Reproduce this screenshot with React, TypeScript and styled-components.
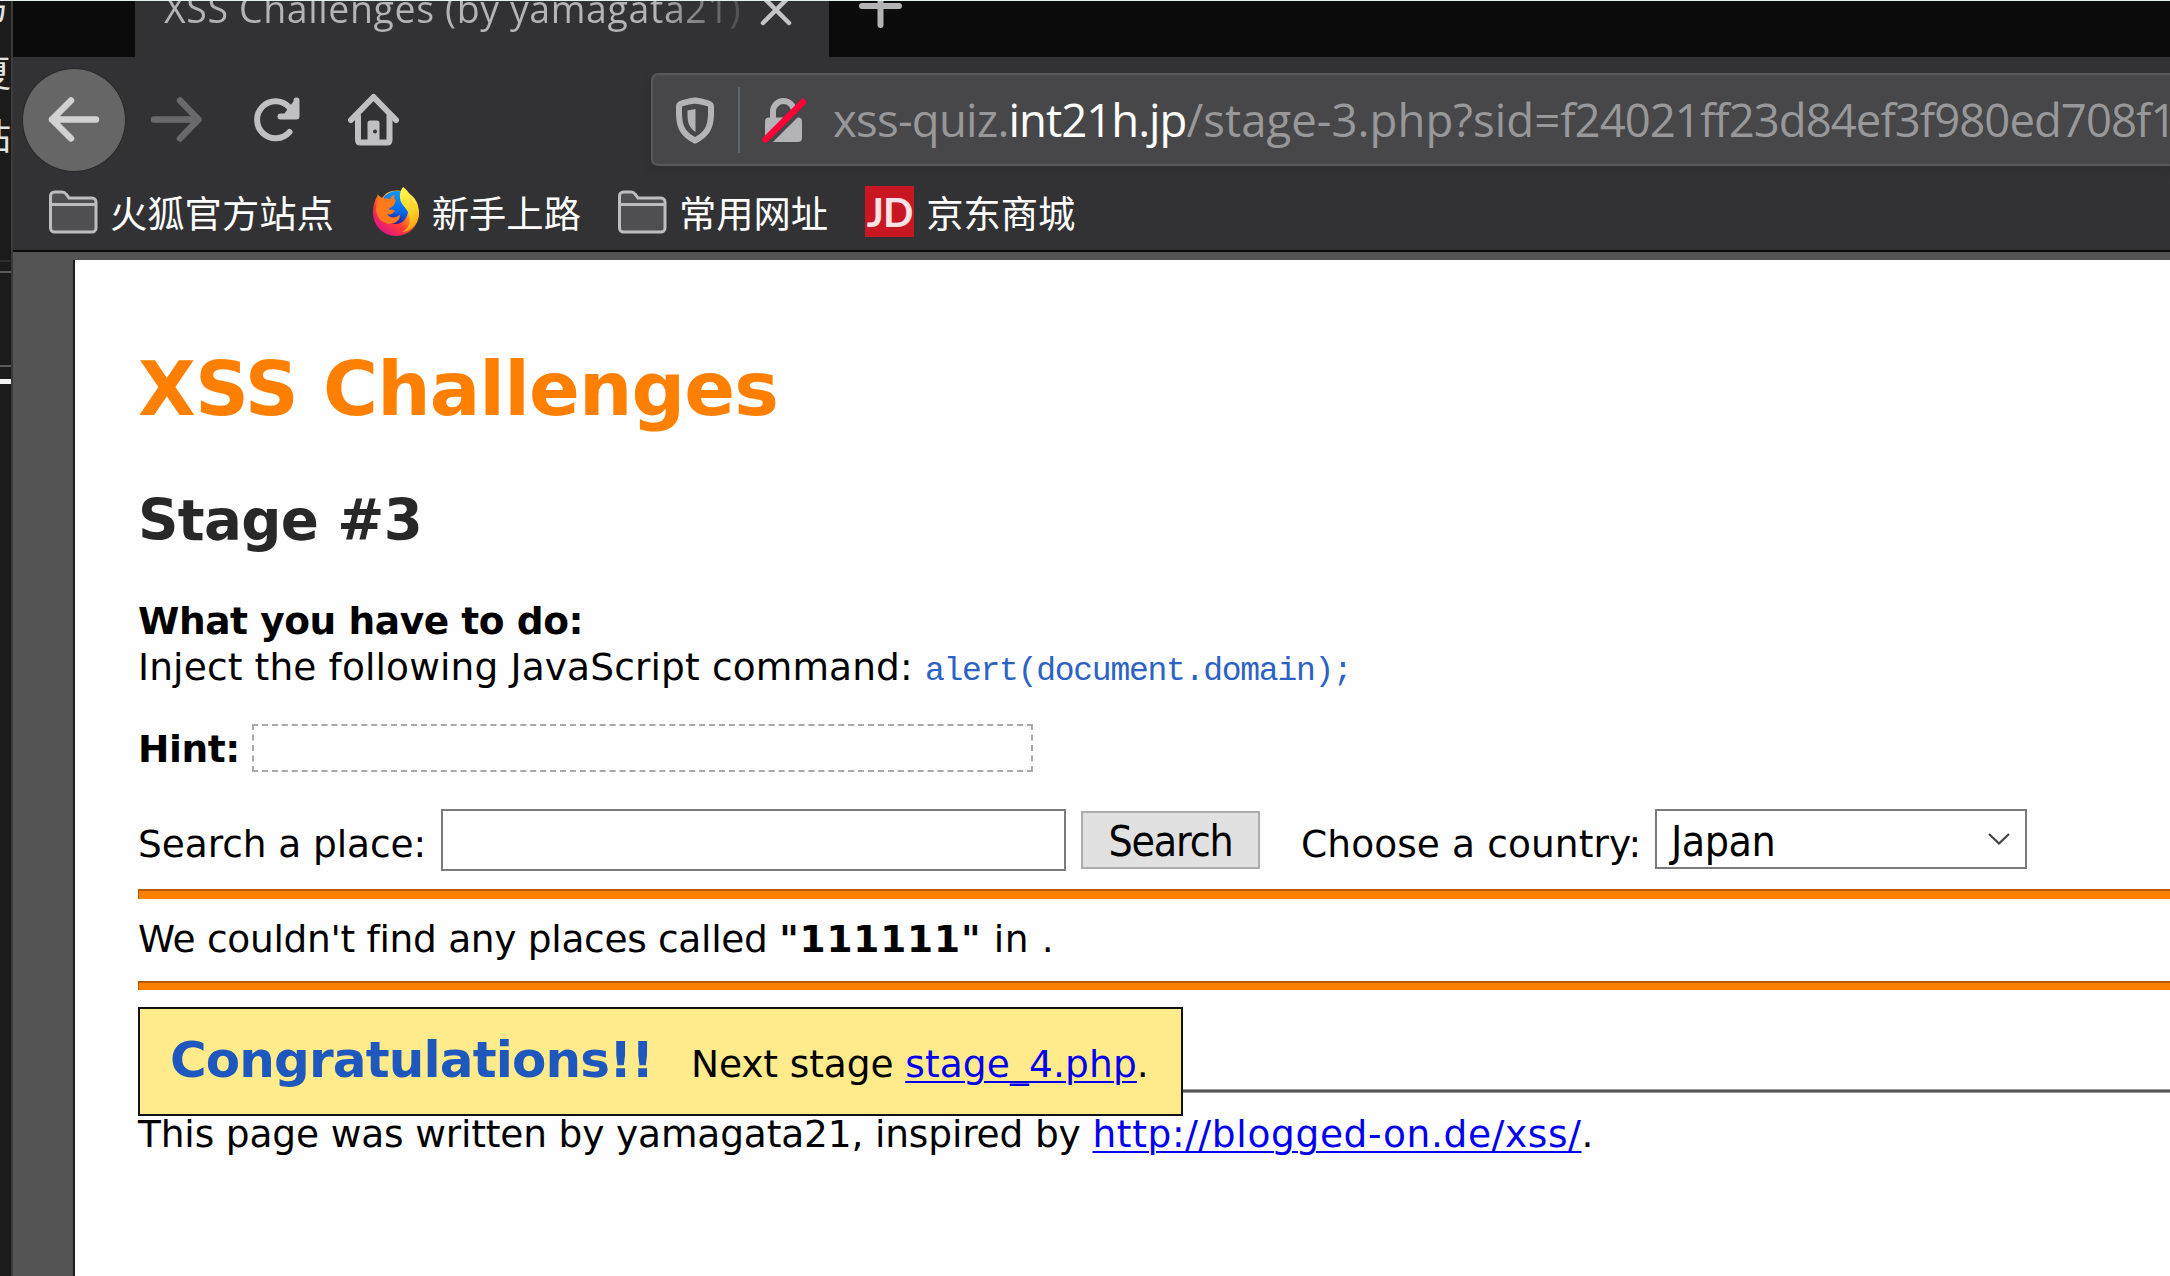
import React from "react";
import styled, { createGlobalStyle } from "styled-components";

const GlobalStyle = createGlobalStyle`
  * { box-sizing: border-box; }
  html, body { margin: 0; padding: 0; background: #1c1c1c; overflow: hidden; }
`;

const uiFont = `"Open Sans", "Noto Sans CJK SC", sans-serif`;
const pageFont = `"DejaVu Sans", sans-serif`;
const controlFont = `"DejaVu Sans Condensed", "DejaVu Sans", sans-serif`;

const Screen = styled.div`
  display: flex;
  width: 2170px;
  height: 1276px;
  overflow: hidden;
  background: #1c1c1c;
  border-top: 1px solid #e6efed;
`;

/* Sliver of the window behind the browser */
const BackWindow = styled.div`
  display: flex;
  flex-direction: column;
  align-items: flex-end;
  flex: none;
  width: 13px;
  overflow: hidden;
  background: #1b1b1b;
  border-right: 2px solid #3a3a3b;
`;

const BackGlyph = styled.div<{ $gap: number }>`
  flex: none;
  margin-top: ${(p) => p.$gap}px;
  height: 40px;
  font: 36px/40px "Noto Sans CJK SC", sans-serif;
  color: #e4e4e4;
`;

const BackLine = styled.div<{ $gap: number; $size: number; $color: string }>`
  flex: none;
  width: 13px;
  margin-top: ${(p) => p.$gap}px;
  height: ${(p) => p.$size}px;
  background: ${(p) => p.$color};
`;

const Browser = styled.div`
  display: flex;
  flex-direction: column;
  flex: 1;
  min-width: 0;
  background: #545454;
`;

const TabBar = styled.div`
  display: flex;
  flex: none;
  height: 56px;
  padding-left: 122px;
  background: #0b0b0c;
`;

const Tab = styled.div`
  display: flex;
  width: 694px;
  height: 56px;
  padding-left: 29px;
  background: #323234;
`;

const TabTitle = styled.div`
  width: 586px;
  margin-top: -17px;
  height: 50px;
  font: 37.5px/50px ${uiFont};
  letter-spacing: 0.6px;
  white-space: nowrap;
  color: transparent;
  background: linear-gradient(90deg, #b4b4b6 84%, #4a4a4c 99%);
  background-clip: text;
  -webkit-background-clip: text;
`;

const TabClose = styled.svg`
  margin: -8px 0 0 9px;
  width: 34px;
  height: 34px;
`;

const NewTab = styled.svg`
  margin: -18px 0 0 28px;
  width: 46px;
  height: 46px;
`;

const NavBar = styled.div`
  display: flex;
  align-items: center;
  flex: none;
  height: 125px;
  background: #323234;
`;

const BackButton = styled.div`
  display: flex;
  align-items: center;
  justify-content: center;
  width: 102px;
  height: 102px;
  margin-left: 10px;
  border-radius: 50%;
  background: #666667;
  box-shadow: 0 0 0 1px #29292a;
`;

const NavIcon = styled.svg<{ $gap?: number }>`
  flex: none;
  width: 56px;
  height: 56px;
  margin-left: ${(p) => p.$gap ?? 0}px;
`;

const UrlBar = styled.div`
  display: flex;
  align-items: center;
  flex: 1;
  min-width: 0;
  height: 93px;
  margin-left: 248px;
  border: 2px solid #59595b;
  border-right: 0;
  border-radius: 7px 0 0 7px;
  background: #474749;
  box-shadow: 0 3px 12px rgba(0, 0, 0, 0.12);
  overflow: hidden;
`;

const UrlIcon = styled.svg<{ $gap: number }>`
  flex: none;
  width: 46px;
  height: 48px;
  margin-left: ${(p) => p.$gap}px;
`;

const UrlDivider = styled.div`
  flex: none;
  width: 2px;
  height: 66px;
  margin-left: 20px;
  background: #5c666e;
`;

const UrlText = styled.div`
  margin: -2px 0 0 25px;
  font: 45.5px/62px ${uiFont};
  letter-spacing: -0.75px;
  white-space: nowrap;
  color: #98989a;
`;

const UrlHost = styled.span`
  color: #fff;
  letter-spacing: -1px;
`;

const UrlPath = styled.span`
  letter-spacing: 0.05px;
`;

const UrlQuery = styled.span`
  letter-spacing: -0.95px;
`;

const Bookmarks = styled.div`
  display: flex;
  align-items: center;
  flex: none;
  height: 70px;
  padding: 0 0 9px 35px;
  background: #323234;
  border-bottom: 2px solid #0d0d0e;
`;

const Bookmark = styled.div<{ $gap?: number; $space?: number }>`
  display: flex;
  align-items: center;
  gap: ${(p) => p.$space ?? 12}px;
  margin-left: ${(p) => p.$gap ?? 0}px;
  font: 37.3px/54px "Noto Sans CJK SC", sans-serif;
  white-space: nowrap;
  color: #fff;
`;

const BookmarkIcon = styled.svg`
  flex: none;
  width: 50px;
  height: 50px;
`;

const JdBadge = styled.div`
  width: 49px;
  height: 51px;
  background: #c81623;
  color: #fbe3e4;
  font: 700 40px/52px Lato, sans-serif;
  letter-spacing: -1px;
  text-align: center;
`;

const Page = styled.main`
  display: flex;
  flex-direction: column;
  flex: 1;
  margin: 8px 0 0 60px;
  padding-left: 63px;
  border-left: 2px solid #1c1c1c;
  background: #fefefe;
  color: #000;
  font: 37.5px/45px ${pageFont};
  white-space: nowrap;
`;

const Title = styled.h1`
  margin: 84px 0 0;
  font-size: 75px;
  line-height: 90px;
  letter-spacing: -0.9px;
  color: #ff8000;
`;

const Stage = styled.h2`
  margin: 53px 0 0;
  font-size: 56.2px;
  line-height: 68px;
  letter-spacing: -0.65px;
  color: #282828;
`;

const Line = styled.div<{ $gap?: number; $track?: number }>`
  flex: none;
  height: 45px;
  margin-top: ${(p) => p.$gap ?? 0}px;
  letter-spacing: ${(p) => p.$track ?? 0}px;
`;

const Tracked = styled.span<{ $track: number }>`
  letter-spacing: ${(p) => p.$track}px;
`;

const Command = styled.code`
  font: 33px/40px "Liberation Mono", monospace;
  letter-spacing: -1.25px;
  color: #2b62c4;
`;

const HintRow = styled.div`
  display: flex;
  flex: none;
  height: 48px;
  margin-top: 34px;
  line-height: 50px;
`;

const HintLabel = styled.b`
  width: 114px;
  letter-spacing: -0.4px;
`;

const HintBox = styled.div`
  width: 781px;
  height: 48px;
  border: 2px dashed #a9a9a9;
`;

const FormRow = styled.div`
  display: flex;
  flex: none;
  height: 62px;
  margin-top: 37px;
`;

const Label = styled.label<{ $width: number; $gap?: number; $track?: number }>`
  flex: none;
  width: ${(p) => p.$width}px;
  margin-left: ${(p) => p.$gap ?? 0}px;
  line-height: 70px;
  letter-spacing: ${(p) => p.$track ?? 0}px;
`;

const Input = styled.input`
  width: 625px;
  height: 62px;
  border: 2px solid #7a7a7a;
  background: #fff;
`;

const SubmitButton = styled.button`
  width: 179px;
  height: 58px;
  margin: 2px 0 0 15px;
  padding: 4px 0 0;
  border: 2px solid #adadad;
  background: #e1e1e1;
  color: #000;
  font: 42.5px/50px ${controlFont};
  letter-spacing: -1.2px;
`;

const Dropdown = styled.div`
  display: flex;
  align-items: center;
  justify-content: space-between;
  width: 372px;
  height: 60px;
  padding: 6px 13px 0 14px;
  border: 2px solid #7a7a7a;
  background: #fff;
  font: 42.5px/50px ${controlFont};
  letter-spacing: -0.5px;
`;

const Chevron = styled.svg`
  width: 26px;
  height: 16px;
  margin-top: -7px;
`;

const OrangeRule = styled.hr<{ $gap: number; $size: number }>`
  flex: none;
  align-self: stretch;
  height: ${(p) => p.$size}px;
  margin: ${(p) => p.$gap}px 0 0;
  border: 0 solid #b35a00;
  border-width: 2px 0 0 1px;
  background: #ff8000;
`;

const NoticeSlot = styled.div`
  flex: none;
  height: 82px;
  margin-top: 17px;
  z-index: 1;
`;

const Notice = styled.div`
  display: flex;
  align-items: baseline;
  width: 1045px;
  height: 109px;
  padding: 19px 0 0 30px;
  border: 2px solid #111;
  background: #ffeb8b;
`;

const Congrats = styled.b`
  width: 521px;
  font-size: 50px;
  line-height: 64px;
  letter-spacing: -0.85px;
  color: #1e57bd;
`;

const Link = styled.a<{ $track?: number }>`
  color: #0000ee;
  letter-spacing: ${(p) => p.$track ?? 0}px;
  text-decoration: underline;
  text-decoration-thickness: 2px;
  text-underline-offset: 4px;
`;

const GreyRule = styled.hr`
  flex: none;
  align-self: stretch;
  height: 4px;
  margin: 0;
  border: 1px solid #9a9a9a;
  border-width: 1px 0;
  background: #555;
`;

const FolderIcon = () => (
  <BookmarkIcon viewBox="0 0 50 50" fill="none" stroke="#bdbdbf" strokeWidth="3">
    <path
      d="M2.5 9a4 4 0 0 1 4-4H14c2 0 3 .5 4 2l3 4h23a4 4 0 0 1 4 4v26a4 4 0 0 1-4 4H6.500a4 4 0 0 1-4-4z"
      fill="#4f4f51"
    />
    <path d="M3 17.500h44" />
  </BookmarkIcon>
);

const FirefoxIcon = () => (
  <BookmarkIcon viewBox="0 0 50 50">
    <defs>
      <linearGradient id="fxBody" x1="0.85" y1="0.1" x2="0.15" y2="0.9">
        <stop offset="0" stopColor="#fff44f" />
        <stop offset="0.35" stopColor="#ffa51a" />
        <stop offset="0.65" stopColor="#ff3a35" />
        <stop offset="1" stopColor="#e0128c" />
      </linearGradient>
      <linearGradient id="fxGlobe" x1="0.6" y1="0" x2="0.4" y2="1">
        <stop offset="0" stopColor="#0a9cff" />
        <stop offset="0.6" stopColor="#0668e8" />
        <stop offset="1" stopColor="#3a128c" />
      </linearGradient>
      <linearGradient id="fxFlame" x1="0.3" y1="0" x2="0.6" y2="1">
        <stop offset="0" stopColor="#fff44f" />
        <stop offset="0.6" stopColor="#ffd02a" />
        <stop offset="1" stopColor="#ff980e" />
      </linearGradient>
    </defs>
    <path d="M6 8C2 14 1 20 1 26a23 23 0 0 0 46 0C47 14 40 6 31 4 20 2 14 5 10 11z" fill="url(#fxBody)" />
    <path d="M12 10C19 2 31 3 34 8c6 8 3 28-9 29-10 0-12-5-11-11z" fill="url(#fxGlobe)" />
    <path
      d="M6 6c0 4 1 5 4 6 3-1 5-1 8 0 1-3 3-4 5-4-2 3 0 5 1 5l-2 5c-1 2-6 3-5 5 3-1 5 0 6 1-2 3-5 4-8 3 3 5 10 4 12 1 2-1 1 6-5 8-9 3-18-4-18-14z"
      fill="#ff7a1a"
    />
    <path
      d="M31 0c7 5 8 10 8 12 5 4 8 9 8 15-1 11-10 18-17 18 7-3 9-10 7-17-1-5-5-8-8-13-2-6-1-11 2-15z"
      fill="url(#fxFlame)"
    />
  </BookmarkIcon>
);

export default function App() {
  return (
    <>
      <GlobalStyle />
      <Screen>
        <BackWindow>
          <BackGlyph $gap={-17}>写</BackGlyph>
          <BackGlyph $gap={27}>夏</BackGlyph>
          <BackGlyph $gap={23}>站</BackGlyph>
          <BackLine $gap={106} $size={2} $color="#2c2c2c" />
          <BackLine $gap={9} $size={2} $color="#5a5a5a" />
          <BackLine $gap={92} $size={2} $color="#5a5a5a" />
          <BackLine $gap={12} $size={5} $color="#f2f2f2" />
        </BackWindow>
        <Browser>
          <TabBar>
            <Tab>
              <TabTitle>XSS Challenges (by yamagata21)</TabTitle>
              <TabClose viewBox="0 0 34 34" stroke="#c4c4c6" strokeWidth="4.500" strokeLinecap="round">
                <path d="M4 4l26 26M30 4L4 30" />
              </TabClose>
            </Tab>
            <NewTab viewBox="0 0 46 46" stroke="#b4b4b6" strokeWidth="6" strokeLinecap="round">
              <path d="M5 23h37M23.500 4v38" />
            </NewTab>
          </TabBar>
          <NavBar>
            <BackButton>
              <NavIcon
                viewBox="0 0 56 56"
                fill="none"
                stroke="#d2d2d3"
                strokeWidth="6.500"
                strokeLinecap="round"
                strokeLinejoin="round"
              >
                <path d="M50 27.500H6M25 8.500L6 27.500l19 19" />
              </NavIcon>
            </BackButton>
            <NavIcon
              $gap={24}
              viewBox="0 0 56 56"
              fill="none"
              stroke="#69696b"
              strokeWidth="6.500"
              strokeLinecap="round"
              strokeLinejoin="round"
            >
              <path d="M5 27.500h44M31 8.500l18.500 19L31 46.500" />
            </NavIcon>
            <NavIcon
              $gap={43}
              viewBox="0 0 56 56"
              fill="none"
              stroke="#c0c0c2"
              strokeWidth="6"
              strokeLinecap="round"
              strokeLinejoin="round"
            >
              <path d="M41.500 40A18.500 18.500 0 1 1 41 15l6 7" />
              <path d="M48.500 8.500v16H32.500M48 11L39 23" />
            </NavIcon>
            <NavIcon
              $gap={43}
              viewBox="0 0 56 56"
              fill="none"
              stroke="#c0c0c2"
              strokeWidth="6"
              strokeLinecap="round"
              strokeLinejoin="round"
            >
              <path d="M4 28L26.500 5 49 28" />
              <path d="M11 24v24q0 2.500 2.500 2.500h26.500q2.500 0 2.500-2.500V24" />
              <path d="M20.500 50V31q0-2.500 2.500-2.500h7q2.500 0 2.500 2.500v19z" fill="#c0c0c2" stroke="none" />
              <circle cx="28" cy="39.500" r="2" fill="#323234" stroke="none" />
            </NavIcon>
            <UrlBar>
              <UrlIcon $gap={19} viewBox="0 0 46 48">
                <path
                  d="M23 4.500c6 1 11 2 13.500 3 1.500.500 2.500 1.500 2.500 3V18c0 14-5 21-16 26.500C12 39 7 32 7 18v-7.500c0-1.500 1-2.500 2.500-3C12 6.500 17 5.500 23 4.500z"
                  fill="none"
                  stroke="#b4b4b6"
                  strokeWidth="6"
                />
                <path d="M23.500 13v23c-6-4-8-9-8-17v-4.500z" fill="#b4b4b6" />
              </UrlIcon>
              <UrlDivider />
              <UrlIcon $gap={22} viewBox="0 0 46 48">
                <path d="M11 24v-8.500a10.500 10.500 0 0 1 21 0V24" fill="none" stroke="#b4b4b6" strokeWidth="6" />
                <rect x="3" y="21.500" width="37" height="24.500" rx="4" fill="#b4b4b6" />
                <path d="M4 48L45 7" stroke="#474749" strokeWidth="7" />
                <path d="M3.500 43.500L41 6" stroke="#ff0039" strokeWidth="6.500" strokeLinecap="round" />
              </UrlIcon>
              <UrlText>
                xss-quiz.<UrlHost>int21h.jp</UrlHost>
                <UrlPath>/stage-3.php?sid=</UrlPath>
                <UrlQuery>f24021ff23d84ef3f980ed708f1</UrlQuery>
              </UrlText>
            </UrlBar>
          </NavBar>
          <Bookmarks>
            <Bookmark>
              <FolderIcon />
              火狐官方站点
            </Bookmark>
            <Bookmark $gap={38} $space={10}>
              <FirefoxIcon />
              新手上路
            </Bookmark>
            <Bookmark $gap={36}>
              <FolderIcon />
              常用网址
            </Bookmark>
            <Bookmark $gap={37}>
              <JdBadge>JD</JdBadge>
              京东商城
            </Bookmark>
          </Bookmarks>
          <Page>
            <Title>XSS Challenges</Title>
            <Stage>Stage #3</Stage>
            <Line $gap={44} $track={-0.42}>
              <b>What you have to do:</b>
            </Line>
            <Line $gap={1} $track={0.14}>
              Inject the following JavaScript command: <Command>alert(document.domain);</Command>
            </Line>
            <HintRow>
              <HintLabel>Hint:</HintLabel>
              <HintBox />
            </HintRow>
            <FormRow>
              <Label $width={303} $track={-0.07}>Search a place:</Label>
              <Input />
              <SubmitButton>Search</SubmitButton>
              <Label $width={354} $gap={41} $track={0.1}>Choose a country:</Label>
              <Dropdown>
                Japan
                <Chevron viewBox="0 0 26 16" fill="none" stroke="#444" strokeWidth="2.200">
                  <path d="M3 3l10 9.500L23 3" />
                </Chevron>
              </Dropdown>
            </FormRow>
            <OrangeRule $gap={18} $size={10} />
            <Line $gap={18} $track={-0.3}>
              We couldn't find any places called{" "}
              <b>
                <Tracked $track={0.8}>"111111"</Tracked>
              </b>
              <Tracked $track={0.6}> in .</Tracked>
            </Line>
            <OrangeRule $gap={19} $size={9} />
            <NoticeSlot>
              <Notice>
                <Congrats>Congratulations!!</Congrats>
                <Tracked $track={-0.1}>
                  Next stage <Link $track={0.15}>stage_4.php</Link>.
                </Tracked>
              </Notice>
            </NoticeSlot>
            <GreyRule />
            <Line $gap={19} $track={-0.15}>
              This page was written by yamagata21, inspired by <Link $track={0.65}>http://blogged-on.de/xss/</Link>
              <Tracked $track={0}>.</Tracked>
            </Line>
          </Page>
        </Browser>
      </Screen>
    </>
  );
}
